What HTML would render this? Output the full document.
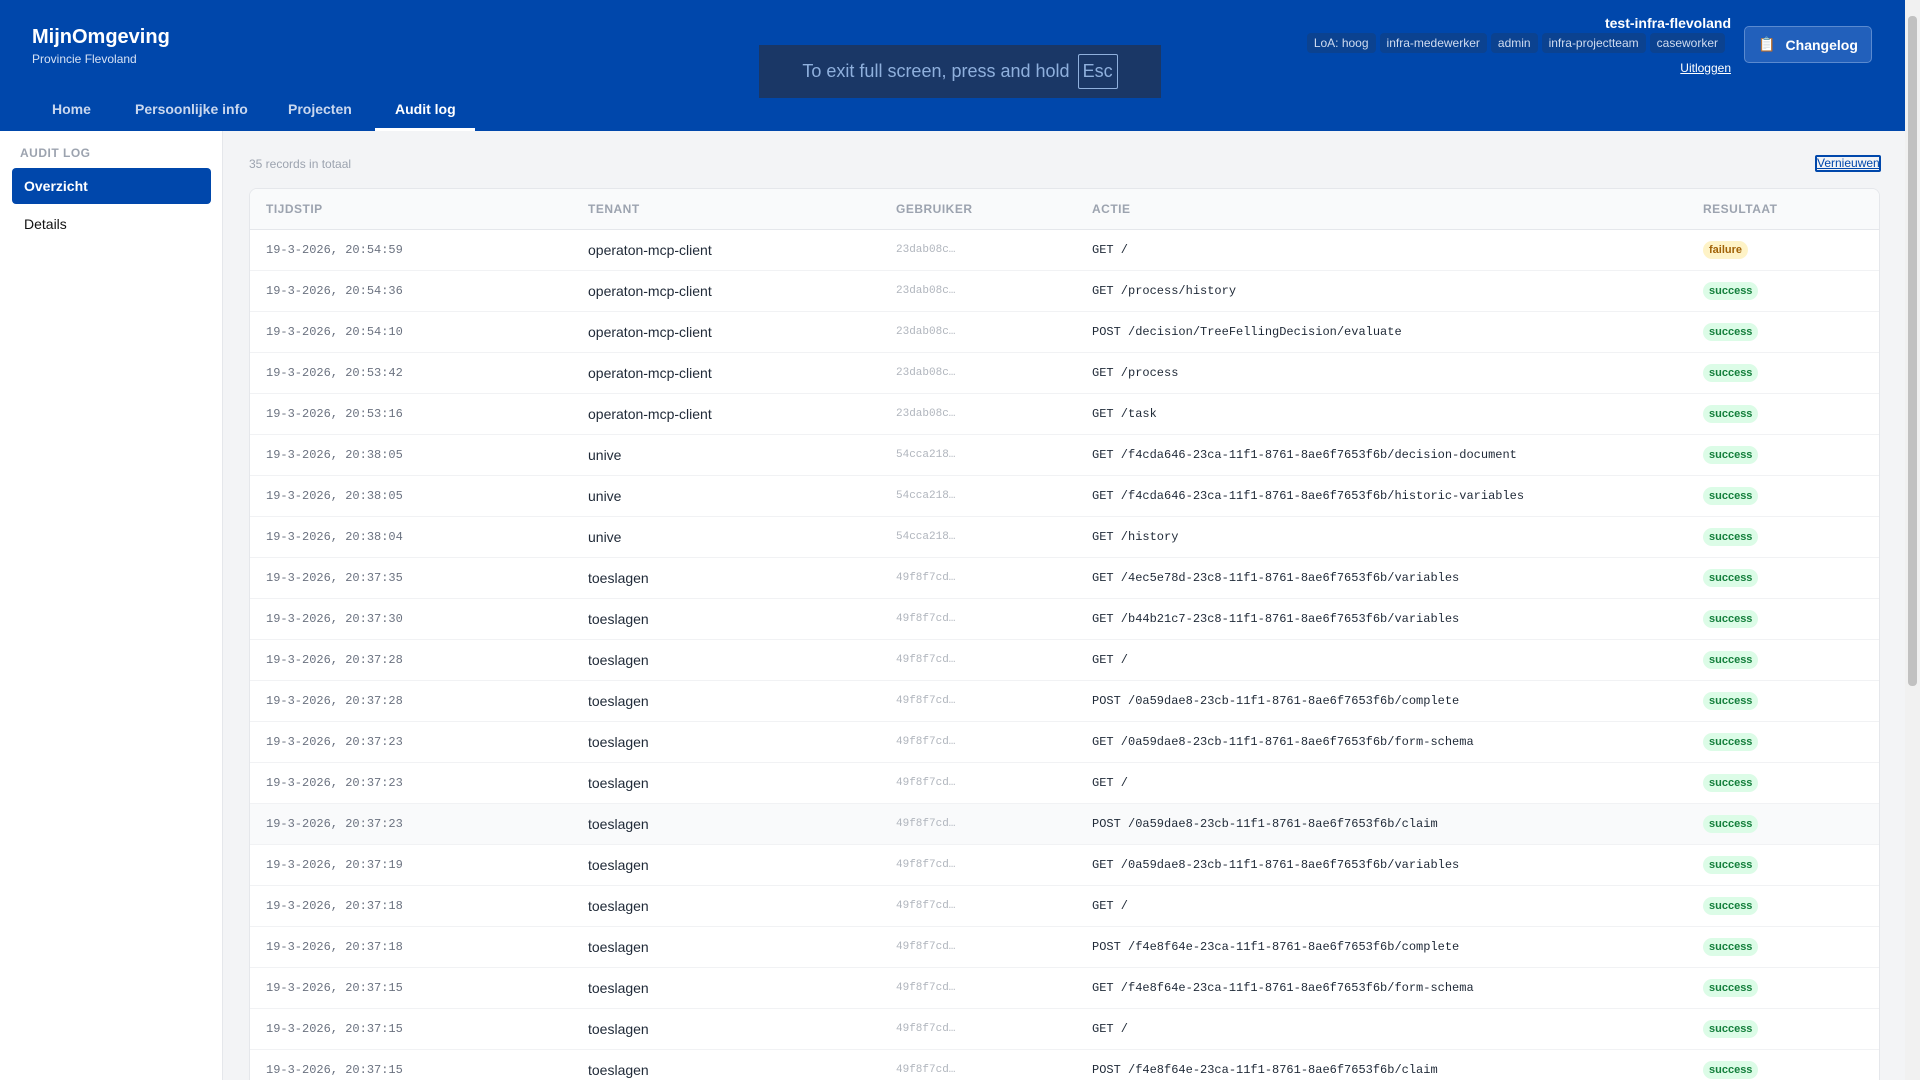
<!DOCTYPE html>
<html><head><meta charset="utf-8"><style>
*{box-sizing:border-box;margin:0;padding:0}
html{width:1920px;height:1080px;overflow:hidden}
body{width:1920px;height:1080px;overflow:hidden;font-family:"Liberation Sans",sans-serif;background:#f3f4f6;position:relative}
.hdr{position:absolute;left:0;top:0;width:1905px;height:131px;background:#0047ab;color:#fff}
.brand{position:absolute;left:32px;top:26px;font-size:20px;font-weight:bold}
.sub{position:absolute;left:32px;top:52px;font-size:12px;color:#d6e2f5}
.nav a{position:absolute;top:101px;font-size:14px;font-weight:bold;color:#c9d7ee}
.nav a.act{color:#fff}
.ul{position:absolute;left:375px;top:128px;width:100px;height:3px;background:#fff}
.user{position:absolute;right:174px;top:15px;font-size:14px;font-weight:bold}
.badges{position:absolute;right:180px;top:33px;display:flex;gap:4px}
.badges span{background:#0b4290;color:#d0dcf0;font-size:12px;padding:3px 7px;border-radius:4px;height:20px}
.logout{position:absolute;right:174px;top:61px;font-size:12px;text-decoration:underline}
.cl{position:absolute;left:1744px;top:26px;width:128px;height:37px;border:1px solid #5a8ad0;background:#2260bb;border-radius:5px;font-size:14px;font-weight:bold;display:flex;align-items:center;justify-content:center;gap:10px}
.fs{position:absolute;left:759px;top:45px;width:402px;height:53px;background:#1a3766;color:#8fb0dd;font-size:18px;display:flex;align-items:center;justify-content:center;gap:8px}
.fs b{font-weight:normal;border:1px solid #8fb0dd;border-radius:2px;padding:6px 4px}
.side{position:absolute;left:0;top:131px;width:223px;height:949px;background:#fff;border-right:1px solid #e5e7eb}
.side .t{position:absolute;left:20px;top:15px;font-size:12px;font-weight:bold;color:#9ca3af;letter-spacing:.5px}
.side .ov{position:absolute;left:12px;top:37px;width:199px;height:36px;background:#0047ab;color:#fff;border-radius:4px;font-size:14px;font-weight:bold;padding:10px 12px}
.side .de{position:absolute;left:24px;top:85px;font-size:14px;color:#111}
.cnt{position:absolute;left:249px;top:157px;font-size:12px;color:#9ca3af}
.ver{position:absolute;left:1815px;top:155px;width:66px;height:17px;border:2px solid #0047ab;border-radius:2px;font-size:12px;color:#0047ab;text-decoration:underline;line-height:13px;text-align:center}
.card{position:absolute;left:249px;top:188px;width:1631px;height:892px;background:#fff;border:1px solid #e5e7eb;border-bottom:none;border-radius:8px 8px 0 0;overflow:hidden}
.th{height:41px;background:#f9fafb;border-bottom:1px solid #e5e7eb;position:relative;font-size:12px;font-weight:bold;color:#9ca3af;letter-spacing:.5px}
.th span,.r span{position:absolute;top:50%;transform:translateY(-50%);white-space:nowrap}
.r{height:41px;border-bottom:1px solid #f1f2f4;position:relative}
.c1{left:16px;font:12px "Liberation Mono",monospace;color:#6b7280}
.c2{left:338px;font-size:14px;color:#1f2937}
.c3{left:646px;font:11px "Liberation Mono",monospace;color:#b0b5bd}
.c4{left:842px;font:12px "Liberation Mono",monospace;color:#1f2937}
.c5{left:1453px;font-size:11px;font-weight:bold;padding:3px 6px;border-radius:9px;background:#dcfce7;color:#15803d}
.c5.f{background:#fef3c7;color:#a16207}
.sb{position:absolute;left:1905px;top:0;width:15px;height:1080px;background:#f1f1f1}
.sb div{position:absolute;left:3px;top:16px;width:9px;height:670px;background:#c1c1c1;border-radius:4px}
</style></head><body>
<div class="hdr">
<div class="brand">MijnOmgeving</div><div class="sub">Provincie Flevoland</div>
<div class="nav"><a style="left:52px">Home</a><a style="left:135px">Persoonlijke info</a><a style="left:288px">Projecten</a><a class="act" style="left:395px">Audit log</a></div>
<div class="ul"></div>
<div class="user">test-infra-flevoland</div>
<div class="badges"><span>LoA: hoog</span><span>infra-medewerker</span><span>admin</span><span>infra-projectteam</span><span>caseworker</span></div>
<div class="logout">Uitloggen</div>
<div class="cl"><span>📋</span>Changelog</div>
<div class="fs">To exit full screen, press and hold <b>Esc</b></div>
</div>
<div class="side"><div class="t">AUDIT LOG</div><div class="ov">Overzicht</div><div class="de">Details</div></div>
<div class="cnt">35 records in totaal</div>
<div class="ver">Vernieuwen</div>
<div class="card">
<div class="th"><span style="left:16px">TIJDSTIP</span><span style="left:338px">TENANT</span><span style="left:646px">GEBRUIKER</span><span style="left:842px">ACTIE</span><span style="left:1453px">RESULTAAT</span></div>
<div class="r"><span class="c1">19-3-2026, 20:54:59</span><span class="c2">operaton-mcp-client</span><span class="c3">23dab08c…</span><span class="c4">GET /</span><span class="c5 f">failure</span></div>
<div class="r"><span class="c1">19-3-2026, 20:54:36</span><span class="c2">operaton-mcp-client</span><span class="c3">23dab08c…</span><span class="c4">GET /process/history</span><span class="c5">success</span></div>
<div class="r"><span class="c1">19-3-2026, 20:54:10</span><span class="c2">operaton-mcp-client</span><span class="c3">23dab08c…</span><span class="c4">POST /decision/TreeFellingDecision/evaluate</span><span class="c5">success</span></div>
<div class="r"><span class="c1">19-3-2026, 20:53:42</span><span class="c2">operaton-mcp-client</span><span class="c3">23dab08c…</span><span class="c4">GET /process</span><span class="c5">success</span></div>
<div class="r"><span class="c1">19-3-2026, 20:53:16</span><span class="c2">operaton-mcp-client</span><span class="c3">23dab08c…</span><span class="c4">GET /task</span><span class="c5">success</span></div>
<div class="r"><span class="c1">19-3-2026, 20:38:05</span><span class="c2">unive</span><span class="c3">54cca218…</span><span class="c4">GET /f4cda646-23ca-11f1-8761-8ae6f7653f6b/decision-document</span><span class="c5">success</span></div>
<div class="r"><span class="c1">19-3-2026, 20:38:05</span><span class="c2">unive</span><span class="c3">54cca218…</span><span class="c4">GET /f4cda646-23ca-11f1-8761-8ae6f7653f6b/historic-variables</span><span class="c5">success</span></div>
<div class="r"><span class="c1">19-3-2026, 20:38:04</span><span class="c2">unive</span><span class="c3">54cca218…</span><span class="c4">GET /history</span><span class="c5">success</span></div>
<div class="r"><span class="c1">19-3-2026, 20:37:35</span><span class="c2">toeslagen</span><span class="c3">49f8f7cd…</span><span class="c4">GET /4ec5e78d-23c8-11f1-8761-8ae6f7653f6b/variables</span><span class="c5">success</span></div>
<div class="r"><span class="c1">19-3-2026, 20:37:30</span><span class="c2">toeslagen</span><span class="c3">49f8f7cd…</span><span class="c4">GET /b44b21c7-23c8-11f1-8761-8ae6f7653f6b/variables</span><span class="c5">success</span></div>
<div class="r"><span class="c1">19-3-2026, 20:37:28</span><span class="c2">toeslagen</span><span class="c3">49f8f7cd…</span><span class="c4">GET /</span><span class="c5">success</span></div>
<div class="r"><span class="c1">19-3-2026, 20:37:28</span><span class="c2">toeslagen</span><span class="c3">49f8f7cd…</span><span class="c4">POST /0a59dae8-23cb-11f1-8761-8ae6f7653f6b/complete</span><span class="c5">success</span></div>
<div class="r"><span class="c1">19-3-2026, 20:37:23</span><span class="c2">toeslagen</span><span class="c3">49f8f7cd…</span><span class="c4">GET /0a59dae8-23cb-11f1-8761-8ae6f7653f6b/form-schema</span><span class="c5">success</span></div>
<div class="r"><span class="c1">19-3-2026, 20:37:23</span><span class="c2">toeslagen</span><span class="c3">49f8f7cd…</span><span class="c4">GET /</span><span class="c5">success</span></div>
<div class="r" style="background:#f9fafb"><span class="c1">19-3-2026, 20:37:23</span><span class="c2">toeslagen</span><span class="c3">49f8f7cd…</span><span class="c4">POST /0a59dae8-23cb-11f1-8761-8ae6f7653f6b/claim</span><span class="c5">success</span></div>
<div class="r"><span class="c1">19-3-2026, 20:37:19</span><span class="c2">toeslagen</span><span class="c3">49f8f7cd…</span><span class="c4">GET /0a59dae8-23cb-11f1-8761-8ae6f7653f6b/variables</span><span class="c5">success</span></div>
<div class="r"><span class="c1">19-3-2026, 20:37:18</span><span class="c2">toeslagen</span><span class="c3">49f8f7cd…</span><span class="c4">GET /</span><span class="c5">success</span></div>
<div class="r"><span class="c1">19-3-2026, 20:37:18</span><span class="c2">toeslagen</span><span class="c3">49f8f7cd…</span><span class="c4">POST /f4e8f64e-23ca-11f1-8761-8ae6f7653f6b/complete</span><span class="c5">success</span></div>
<div class="r"><span class="c1">19-3-2026, 20:37:15</span><span class="c2">toeslagen</span><span class="c3">49f8f7cd…</span><span class="c4">GET /f4e8f64e-23ca-11f1-8761-8ae6f7653f6b/form-schema</span><span class="c5">success</span></div>
<div class="r"><span class="c1">19-3-2026, 20:37:15</span><span class="c2">toeslagen</span><span class="c3">49f8f7cd…</span><span class="c4">GET /</span><span class="c5">success</span></div>
<div class="r"><span class="c1">19-3-2026, 20:37:15</span><span class="c2">toeslagen</span><span class="c3">49f8f7cd…</span><span class="c4">POST /f4e8f64e-23ca-11f1-8761-8ae6f7653f6b/claim</span><span class="c5">success</span></div>
</div>
<div class="sb"><div></div></div>
</body></html>
